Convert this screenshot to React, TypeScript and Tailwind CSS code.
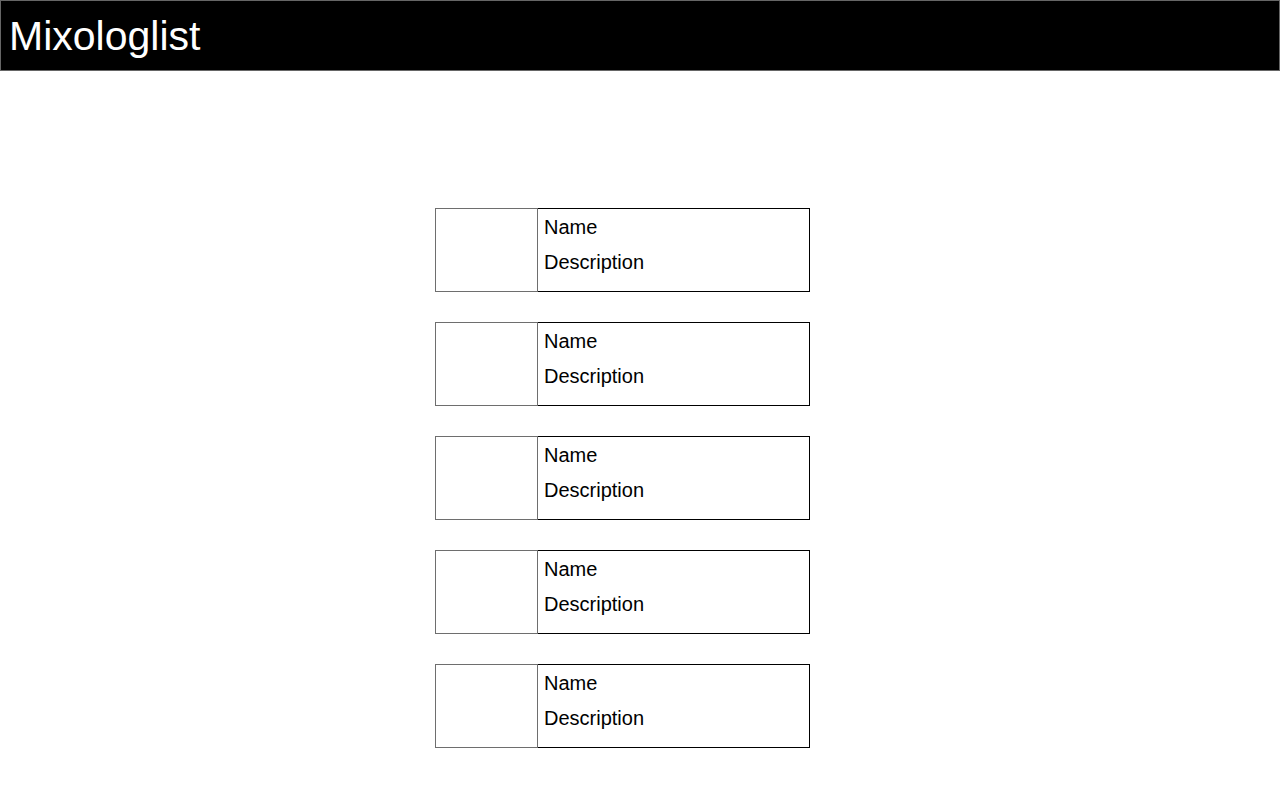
export default function App() {
  const items = [0, 1, 2, 3, 4];

  return (
    <div className="min-h-screen bg-white" style={{ fontFamily: '"Liberation Sans", Arial, sans-serif' }}>
      {/* Header */}
      <header className="h-[71px] bg-black border border-[#666666] flex items-center pl-2">
        <h1 className="text-[41px] leading-none text-white font-normal mt-[1px]">Mixologlist</h1>
      </header>

      {/* Drink list */}
      <div className="pl-[435px] pt-[137px] flex flex-col gap-[30px]">
        {items.map((i) => (
          <div key={i} className="flex w-[375px] h-[84px]">
            <div className="w-[103px] border border-[#6e6e6e]" />
            <div className="flex-1 border border-l-0 border-black pl-[6px] pt-[1px] text-[20px] leading-[35px] text-black">
              <div>Name</div>
              <div>Description</div>
            </div>
          </div>
        ))}
      </div>
    </div>
  );
}
